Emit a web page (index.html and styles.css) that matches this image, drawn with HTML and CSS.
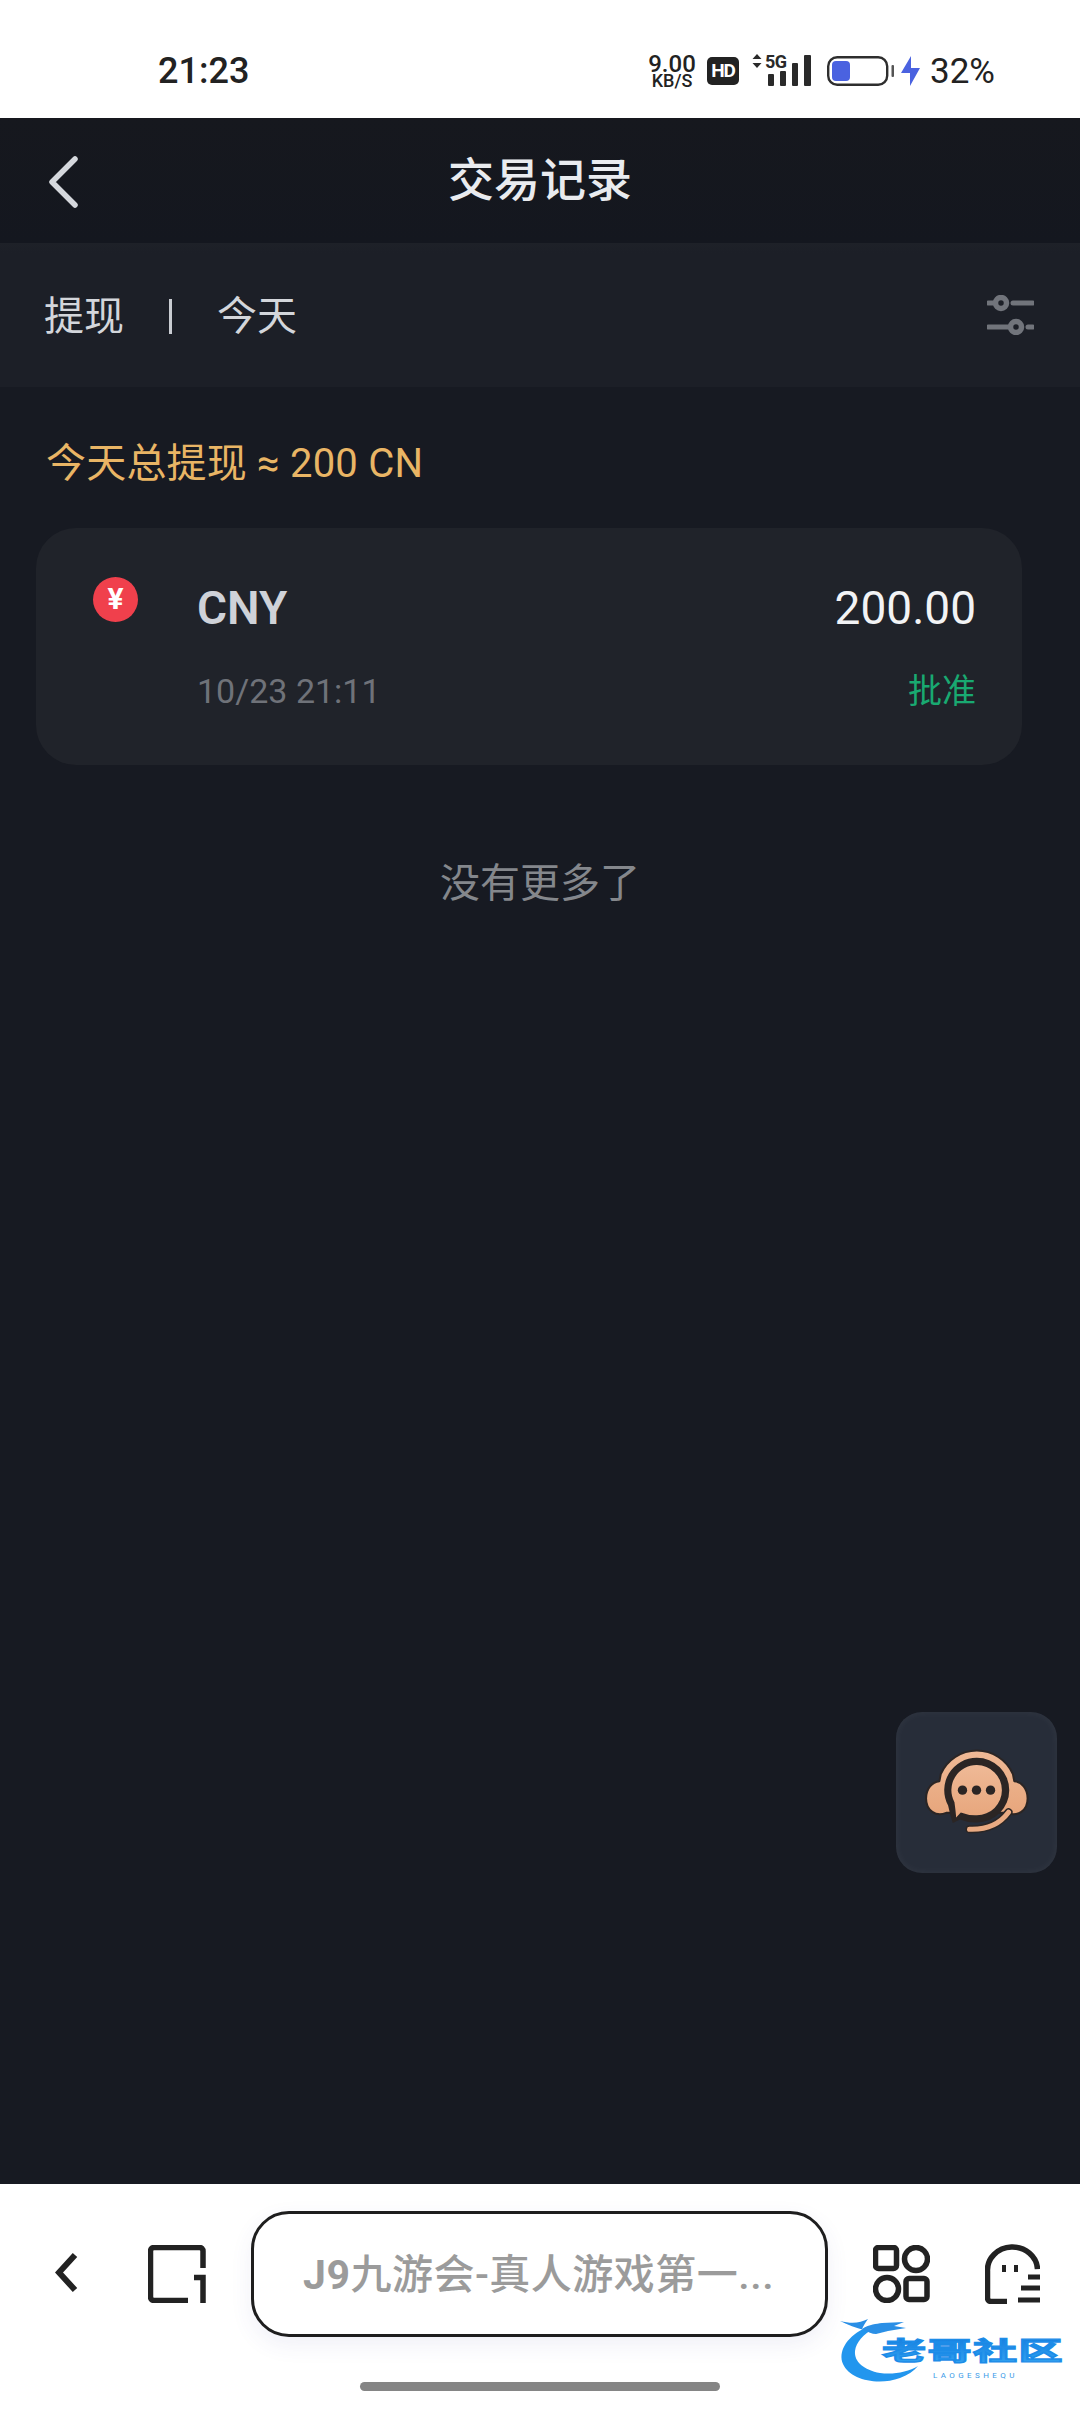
FILE: index.html
```html
<!DOCTYPE html>
<html lang="zh-CN">
<head>
<meta charset="utf-8">
<title>交易记录</title>
<link rel="stylesheet" href="styles.css">
</head>
<body>
<div class="phone">
  <div class="status">
    <span class="time">21:23</span>
    <div class="status-right">
      <div class="net"><span class="net-num">9.00</span><span class="net-unit">KB/S</span></div>
      <span class="hd">HD</span>
      <svg class="signal" width="60" height="44" viewBox="0 -10 60 44">
        <path d="M5 0 L9.500 5 H0.500Z M5 14 L9.500 9 H0.500Z" fill="#2a2a2a"/>
        <text class="five-g" x="13" y="14">5G</text>
        <rect x="16" y="20" width="6" height="12" rx="1" fill="#2a2a2a"/>
        <rect x="28" y="17" width="6" height="15" rx="1" fill="#2a2a2a"/>
        <rect x="40" y="9" width="6" height="23" rx="1" fill="#2a2a2a"/>
        <rect x="52" y="1" width="7" height="31" rx="1" fill="#2a2a2a"/>
      </svg>
      <svg class="battery" width="67" height="30" viewBox="0 0 67 30">
        <rect x="1.200" y="1.200" width="59" height="27.600" rx="9" fill="none" stroke="#2e2e2e" stroke-width="2.400"/>
        <rect x="5" y="5" width="18" height="20" rx="4" fill="#4a62e0"/>
        <rect x="64.500" y="9" width="2.500" height="12" rx="1" fill="#555"/>
      </svg>
      <svg class="bolt" width="19" height="30" viewBox="0 0 19 30">
        <path d="M10 0 V12 H19 L9 30 V17 H0Z" fill="#4a62e0"/>
      </svg>
      <span class="pct">32%</span>
    </div>
  </div>

  <header class="topbar">
    <svg class="back" width="29" height="52" viewBox="0 0 29 52">
      <path d="M26 3 L3 26 L26 49" fill="none" stroke="#d5d8dd" stroke-width="5.500" stroke-linecap="round" stroke-linejoin="round"/>
    </svg>
    <h1 class="title">交易记录</h1>
  </header>

  <div class="filter">
    <span class="filter-item">提现</span>
    <span class="filter-sep"></span>
    <span class="filter-item">今天</span>
    <svg class="sliders" width="47" height="40" viewBox="0 0 47 40">
      <g fill="none" stroke="#71747b" stroke-linecap="round">
        <path d="M1.500 8 H6 M26 8 H45.500 M1.500 32 H21 M41 32 H45.500" stroke-width="5"/>
        <circle cx="14" cy="8" r="5.500" stroke-width="5.500"/>
        <circle cx="29" cy="32" r="5.500" stroke-width="5.500"/>
      </g>
    </svg>
  </div>

  <main class="content">
    <p class="summary">今天总提现 ≈ 200 CN</p>
    <section class="card">
      <span class="coin">¥</span>
      <div class="card-body">
        <div class="row row-main">
          <span class="currency">CNY</span>
          <span class="amount">200.00</span>
        </div>
        <div class="row row-sub">
          <span class="date">10/23 21:11</span>
          <span class="state">批准</span>
        </div>
      </div>
    </section>
    <p class="end">没有更多了</p>

    <div class="fab">
      <svg width="161" height="161" viewBox="48 36 482 482">
        <defs>
          <linearGradient id="peach" x1="0" y1="0" x2="0" y2="1">
            <stop offset="0" stop-color="#efb996"/>
            <stop offset="1" stop-color="#e7a67c"/>
          </linearGradient>
        </defs>
        <path d="M198 338 C168 350 138 332 138 295 C138 265 156 245 178 243 L182 222 A118 118 0 0 1 398 222 L402 243 C424 245 442 265 442 295 C442 332 412 350 382 338Z" fill="url(#peach)" stroke="#2b2524" stroke-width="6" stroke-linejoin="round"/>
        <path d="M385 336 Q345 390 268 387" fill="none" stroke="#2b2524" stroke-width="24" stroke-linecap="round"/>
        <path d="M385 336 Q345 390 268 387" fill="none" stroke="#e9aa82" stroke-width="15" stroke-linecap="round"/>
        <path d="M290 173 A97 97 0 1 1 290 367 Q264 368 240 358 L218 368 Q210 345 204 316 A97 97 0 0 1 290 173Z" fill="#2b2524"/>
        <path d="M290 195 A75 75 0 1 1 290 345 Q264 346 242 337 L228 352 Q227 335 223 306 A75 75 0 0 1 290 195Z" fill="url(#peach)"/>
        <circle cx="247" cy="270" r="14" fill="#2b2524"/>
        <circle cx="289" cy="270" r="14" fill="#2b2524"/>
        <circle cx="331" cy="270" r="14" fill="#2b2524"/>
      </svg>
    </div>
  </main>

  <nav class="browser">
    <div class="browser-row">
      <svg class="b-back" width="23" height="41" viewBox="0 0 23 41">
        <path d="M20 3 L4 20.500 L20 38" fill="none" stroke="#222" stroke-width="6"/>
      </svg>
      <svg class="b-tabs" width="58" height="58" viewBox="0 0 58 58">
        <path d="M55 23 V6 a3.500 3.500 0 0 0-3.500-3.500 H6 A3.500 3.500 0 0 0 2.500 6 V52 a3.500 3.500 0 0 0 3.500 3.500 H40" fill="none" stroke="#222" stroke-width="5.500"/>
        <path d="M55 58 V32.500 H46" fill="none" stroke="#222" stroke-width="5.500"/>
      </svg>
      <div class="urlbar"><span class="url-text"><b class="url-strong">J9</b>九游会-真人游戏第一...</span></div>
      <svg class="b-grid" width="57" height="58" viewBox="0 0 57 58">
        <g fill="none" stroke="#222" stroke-width="5.500">
          <rect x="2.500" y="2.500" width="21" height="21" rx="3"/>
          <circle cx="43" cy="14" r="11.500"/>
          <circle cx="14" cy="44" r="11.500"/>
          <rect x="33" y="33.500" width="21" height="21" rx="3"/>
        </g>
      </svg>
      <svg class="b-ghost" width="55" height="60" viewBox="0 0 55 60">
        <path d="M52.500 25 A25 23 0 0 0 2.500 27 V54 a3.500 3.500 0 0 0 3.500 3.500 H22" fill="none" stroke="#222" stroke-width="5.500"/>
        <path d="M19 21 V28 M31 21 V28" stroke="#222" stroke-width="4"/>
        <path d="M43 33 H55 M36 44 H55 M33 56 H55" stroke="#222" stroke-width="5"/>
      </svg>
    </div>
    <div class="home-pill"></div>
    <svg class="watermark" width="230" height="80" viewBox="0 0 230 80">
      <defs>
        <linearGradient id="wm" x1="0" y1="0" x2="0" y2="1">
          <stop offset="0" stop-color="#1278dc"/>
          <stop offset="1" stop-color="#35a6f2"/>
        </linearGradient>
      </defs>
      <path d="M25 19 C8 28 0 42 5 54 C12 70 40 76 62 68 C70 65 76 61 80 56 C70 62 55 65 42 63 C26 60 16 52 17 41 C18 32 26 24 35 19Z" fill="#2296ee"/>
      <path d="M2 11 C14 14 22 13 30 9 C27 13 26 15 24 19 C32 14 38 14 44 13 L66 12 L56 16 L68 18 L50 21 L38 24 C34 24 30 22 26 20 C18 18 10 15 2 11Z" fill="#2a8fe6"/>
      <text class="wm-cn" transform="translate(44 50) scale(1 .56)" x="0" y="0" fill="url(#wm)">老哥社区</text>
      <text class="wm-en" x="95" y="68">LAOGESHEQU</text>
    </svg>
  </nav>
</div>
</body>
</html>
```
FILE: styles.css
```css
* { box-sizing: border-box; }
html, body { margin: 0; padding: 0; }
body { font-family: Roboto, "Noto Sans CJK SC", sans-serif; background: #171a22; }
p, h1 { margin: 0; font-weight: 400; }

.phone { width: 1080px; height: 2412px; display: flex; flex-direction: column; overflow: hidden; }

/* status bar */
.status { height: 118px; flex: none; background: #fff; display: flex; align-items: center; justify-content: space-between; padding: 22px 85px 0 158px; color: #222; }
.time { font-size: 36px; font-weight: 500; line-height: 1; margin-top: 2px; }
.status-right { display: flex; align-items: center; }
.net { display: flex; flex-direction: column; align-items: center; width: 50px; margin-top: 2px; font-weight: 500; gap: 1px; }
.net-num { font-size: 24px; line-height: 18px; }
.net-unit { font-size: 18px; line-height: 14px; }
.hd { width: 32px; height: 28px; margin-left: 10px; background: #222; color: #fff; border-radius: 5px; font-size: 19px; font-weight: 700; line-height: 28px; text-align: center; letter-spacing: -1px; margin-top: 2px; }
.signal { margin-left: 13px; margin-top: -8px; }
.five-g { font-family: Roboto, sans-serif; font-size: 18px; font-weight: 700; fill: #2a2a2a; letter-spacing: -.5px; }
.battery { margin-left: 15px; margin-top: 2px; }
.bolt { margin-left: 7px; margin-top: 2px; }
.pct { font-size: 35px; margin-left: 10px; line-height: 1; margin-top: 2px; }

/* header */
.topbar { height: 125px; flex: none; background: linear-gradient(#16181e, #14171f); display: flex; align-items: center; justify-content: center; position: relative; padding-bottom: 2px; }
.back { position: absolute; left: 49px; top: 38px; }
.title { font-size: 46px; font-weight: 500; color: #e9ebef; line-height: 1; }

/* filter */
.filter { height: 144px; flex: none; background: linear-gradient(#1e2128 0, #1c1f27 10px); display: flex; align-items: center; padding: 3px 46px 0 44px; }
.filter-item { font-size: 40px; color: #d3d6db; line-height: 1; }
.filter-sep { width: 3px; height: 35px; background: #c9ccd2; margin: 0 45px; }
.sliders { margin-left: auto; margin-top: -3px; }

/* content */
.content { flex: 1; position: relative; background: #171a22; padding: 55px 58px 0 36px; }
.summary { font-size: 40px; color: #e9b565; line-height: 44px; padding-left: 10px; letter-spacing: .2px; }
.card { margin-top: 42px; height: 237px; background: #20232a; border-radius: 40px; display: flex; padding: 49px 46px 0 57px; }
.coin { width: 45px; height: 45px; flex: none; border-radius: 50%; background: #f0404c; color: #fff; font-size: 30px; font-weight: 700; line-height: 43px; text-align: center; }
.card-body { flex: 1; margin-left: 59px; }
.row { display: flex; justify-content: space-between; align-items: center; }
.row-main { height: 52px; padding-top: 10px; }
.row-sub { margin-top: 42px; height: 40px; }
.currency { font-size: 46px; font-weight: 600; color: #cfd2d8; line-height: 1; }
.amount { font-size: 46px; color: #f2f3f5; line-height: 1; }
.date { font-size: 34px; color: #6f7279; line-height: 1; }
.state { font-size: 34px; color: #19a971; line-height: 1; }
.end { margin-top: 97px; text-align: center; font-size: 40px; color: #84878c; line-height: 44px; padding-left: 22px; }

.fab { position: absolute; left: 896px; top: 1325px; width: 161px; height: 161px; border-radius: 26px; background: #272d39; box-shadow: inset 0 0 10px rgba(255,255,255,.05); }
.fab svg { display: block; }

/* browser bar */
.browser { height: 228px; flex: none; background: #fff; position: relative; display: flex; flex-direction: column; align-items: center; }
.browser-row { width: 100%; height: 126px; margin-top: 27px; display: flex; align-items: center; padding-left: 55px; }
.b-back { margin-bottom: 4px; }
.b-tabs { margin-left: 70px; }
.urlbar { width: 577px; height: 126px; margin-left: 45px; border: 3px solid #1e1e1e; border-radius: 38px; display: flex; align-items: center; padding: 3px 0 0 49px; box-shadow: 0 8px 22px rgba(70,70,150,.08); background: #fff; }
.url-text { font-size: 41px; font-weight: 500; color: #9b9b9b; line-height: 1; white-space: nowrap; letter-spacing: .5px; }
.url-strong { font-weight: 700; }
.b-grid { margin-left: 45px; }
.b-ghost { margin-left: 55px; }
.home-pill { width: 360px; height: 9px; border-radius: 5px; background: #858585; margin-top: 45px; }
.watermark { position: absolute; left: 838px; top: 126px; }
.wm-cn { font-family: "Noto Sans CJK SC", sans-serif; font-size: 44px; font-weight: 700; letter-spacing: 1.500px; stroke: #1c8ce8; stroke-width: 2.500px; }
.wm-en { font-family: Roboto, sans-serif; font-size: 8px; letter-spacing: 3.400px; fill: #3a9ae8; }
```
